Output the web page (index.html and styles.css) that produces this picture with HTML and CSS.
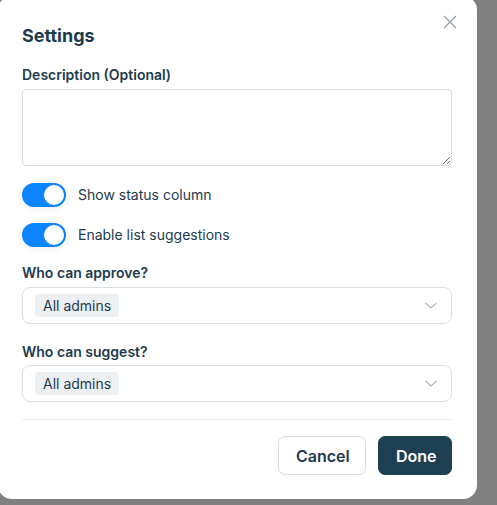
FILE: index.html
```html
<!DOCTYPE html>
<html lang="en">
<head>
<meta charset="utf-8">
<title>Settings</title>
<link rel="stylesheet" href="styles.css">
</head>
<body>
<div class="modal">
  <button class="close" aria-label="Close">
    <svg width="14" height="14" viewBox="0 0 14 14"><path d="M1 1L13 13M13 1L1 13" stroke="#8d9ba5" stroke-width="1.2" fill="none"/></svg>
  </button>
  <h2 class="title">Settings</h2>
  <label class="label">Description (Optional)</label>
  <textarea class="textarea"></textarea>
  <div class="toggle-row">
    <span class="toggle"><span class="knob"></span></span>
    <span class="toggle-text">Show status column</span>
  </div>
  <div class="toggle-row second">
    <span class="toggle"><span class="knob"></span></span>
    <span class="toggle-text">Enable list suggestions</span>
  </div>
  <label class="label field-label">Who can approve?</label>
  <div class="select">
    <span class="chip">All admins</span>
    <svg class="chevron" width="12" height="7" viewBox="0 0 12 7"><path d="M0.5 0.8L6 6L11.5 0.8" stroke="#a7b3bb" stroke-width="1.1" fill="none"/></svg>
  </div>
  <label class="label field-label second-field">Who can suggest?</label>
  <div class="select">
    <span class="chip">All admins</span>
    <svg class="chevron" width="12" height="7" viewBox="0 0 12 7"><path d="M0.5 0.8L6 6L11.5 0.8" stroke="#a7b3bb" stroke-width="1.1" fill="none"/></svg>
  </div>
  <div class="divider"></div>
  <div class="actions">
    <button class="btn cancel">Cancel</button>
    <button class="btn done">Done</button>
  </div>
</div>
</body>
</html>
```
FILE: styles.css
```css
* { box-sizing: border-box; }
html, body { margin: 0; padding: 0; }
body {
  background: #808080;
  width: 497px;
  height: 505px;
  overflow: hidden;
  font-family: Inter, "Noto Sans", sans-serif;
  color: #1e3b4d;
}
.modal {
  position: relative;
  margin: -4px 0 0 -2px;
  width: 479px;
  height: 503px;
  background: #fff;
  border-radius: 14px;
  padding: 28px 25px 24px 24px;
  display: flex;
  flex-direction: column;
}
.close {
  position: absolute;
  top: 19px;
  right: 20px;
  width: 14px;
  height: 14px;
  padding: 0;
  border: 0;
  background: none;
  display: flex;
}
.title {
  margin: 0;
  font-size: 18px;
  line-height: 24px;
  font-weight: 700;
  color: #1e3b4e;
}
.label {
  display: block;
  margin-top: 17px;
  font-size: 14px;
  line-height: 20px;
  font-weight: 600;
  color: #1e3b4e;
}
.textarea {
  display: block;
  margin-top: 4px;
  width: 100%;
  height: 77px;
  border: 1px solid #d6dce0;
  border-radius: 4px;
  resize: vertical;
  font-family: inherit;
  outline: none;
}
.toggle-row {
  display: flex;
  align-items: center;
  gap: 12px;
  margin-top: 17px;
  height: 24px;
}
.toggle-row.second { margin-top: 16px; }
.toggle {
  width: 44px;
  height: 24px;
  border-radius: 12px;
  background: #0a84ff;
  display: flex;
  align-items: center;
  justify-content: flex-end;
  padding: 2px;
  box-shadow: 0 1px 8px rgba(0, 0, 0, 0.08);
}
.knob {
  width: 20px;
  height: 20px;
  border-radius: 50%;
  background: #fff;
}
.toggle-text {
  font-size: 14px;
  line-height: 20px;
  color: #1e3b4d;
}
.field-label { margin-top: 16px; margin-bottom: 4px; }
.second-field { margin-top: 18px; margin-bottom: 3px; }
.select {
  height: 37px;
  border: 1px solid #d9dfe3;
  border-radius: 8px;
  display: flex;
  align-items: center;
  justify-content: space-between;
  padding: 0 14px 0 12px;
}
.chip {
  background: #edf0f3;
  border-radius: 4px;
  height: 23px;
  padding: 0 8px;
  font-size: 14px;
  line-height: 23px;
  color: #1e3b4d;
}
.chevron { display: block; }
.divider {
  margin-top: 17px;
  height: 1px;
  background: #eceff1;
}
.actions {
  margin-top: 16px;
  display: flex;
  justify-content: flex-end;
  gap: 12px;
}
.btn {
  height: 39px;
  border-radius: 7px;
  font-family: inherit;
  font-size: 16px;
  font-weight: 600;
  padding: 0 17px;
}
.cancel {
  width: 88px;
  background: #fff;
  border: 1px solid #d6dce0;
  color: #1e3b4e;
}
.done {
  width: 74px;
  background: #1f4052;
  border: 1px solid #1f4052;
  color: #fff;
}
```
